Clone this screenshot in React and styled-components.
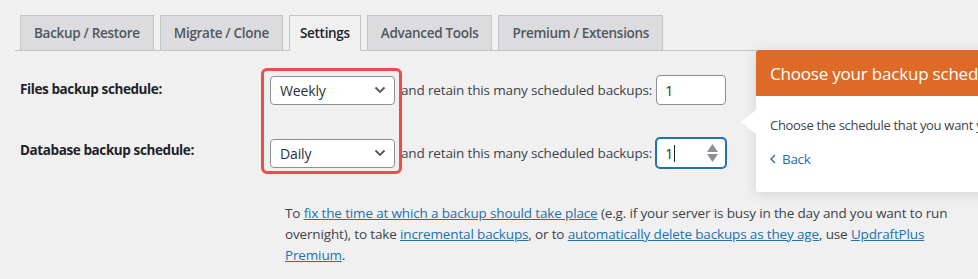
import React from 'react'
import styled, { createGlobalStyle } from 'styled-components'

const GlobalStyle = createGlobalStyle`
  html, body {
    margin: 0;
    padding: 0;
    background: #f0f0f1;
    font-family: "Open Sans", "Noto Sans", Arial, sans-serif;
    color: #3c434a;
    overflow: hidden;
  }
`

const Page = styled.div`
  position: relative;
  width: 978px;
  height: 279px;
  padding: 15px 0 0 15px;
  box-sizing: border-box;
`

const TabBar = styled.nav`
  display: flex;
  align-items: flex-end;
  gap: 6px;
  height: 35px;
  padding-left: 5px;
  border-bottom: 1px solid #c3c4c7;
  box-sizing: content-box;
`

const Tab = styled.a`
  display: flex;
  align-items: center;
  height: 34px;
  padding: 0 ${p => p.$pad || 13}px;
  margin-bottom: -1px;
  border: 1px solid #c3c4c7;
  border-bottom-color: ${p => (p.$active ? '#f0f0f1' : '#c3c4c7')};
  background: ${p => (p.$active ? '#f0f0f1' : '#dcdcde')};
  color: ${p => (p.$active ? '#1d2327' : '#50575e')};
  font-size: 13.5px;
  font-weight: 600;
  letter-spacing: -0.3px;
  white-space: nowrap;
`

const Form = styled.div`
  display: flex;
  flex-direction: column;
  padding-left: 5px;
  margin-top: 9px;
`

const Row = styled.div`
  display: grid;
  grid-template-columns: 250px 1fr;
  padding: 15px 0 ${p => p.$bottom || 18}px;
`

const Label = styled.div`
  padding-top: ${p => p.$top ?? 4}px;
  font-size: 13.5px;
  font-weight: 700;
  color: #1d2327;
  line-height: 20px;
  letter-spacing: -0.4px;
`

const Field = styled.div`
  display: flex;
  align-items: center;
  font-size: 13.5px;
  color: #3c434a;
  letter-spacing: -0.15px;
`

const Select = styled.div`
  display: flex;
  align-items: center;
  justify-content: space-between;
  width: 125px;
  height: 29px;
  box-sizing: border-box;
  padding: 0 8px 0 9px;
  border: 1px solid #8c8f94;
  border-radius: 4px;
  background: #fff;
  color: #2c3338;
  font-size: 14px;
  margin-right: 6px;
`

const NumberBox = styled.div`
  position: relative;
  display: flex;
  align-items: center;
  width: 70px;
  height: 30px;
  box-sizing: border-box;
  margin-left: 4px;
  padding-left: 8px;
  border: 1px solid ${p => (p.$focus ? '#2271b1' : '#8c8f94')};
  box-shadow: ${p => (p.$focus ? '0 0 0 1px #2271b1' : 'none')};
  border-radius: 4px;
  background: #fff;
  color: #2c3338;
  font-size: 14px;
`

const Caret = styled.span`
  display: inline-block;
  width: 1px;
  height: 17px;
  margin-left: 1px;
  background: #1d2327;
`

const Spinner = styled.div`
  position: absolute;
  right: 7px;
  top: 5px;
  display: flex;
  flex-direction: column;
  gap: 2px;
`

const Highlight = styled.div`
  position: absolute;
  left: 261px;
  top: 68px;
  width: 141px;
  height: 106px;
  box-sizing: border-box;
  border: 3px solid #f04b4c;
  border-radius: 6px;
  pointer-events: none;
`

const Note = styled.p`
  margin: 17px 0 0 270px;
  width: 672px;
  font-size: 13.5px;
  line-height: 21px;
  color: #3c434a;
  letter-spacing: -0.15px;
`

const Link = styled.a`
  color: #2271b1;
  text-decoration: underline;
`

const Popover = styled.div`
  position: absolute;
  left: 756px;
  top: 50px;
  width: 320px;
  height: 142px;
  background: #fff;
  border-radius: 3px;
  box-shadow: 0 2px 14px rgba(0, 0, 0, 0.12);

  &::before {
    content: '';
    position: absolute;
    left: -15px;
    top: 60px;
    border-top: 12px solid transparent;
    border-bottom: 12px solid transparent;
    border-right: 15px solid #fff;
  }
`

const PopHeader = styled.div`
  height: 46px;
  display: flex;
  align-items: center;
  padding-left: 14px;
  background: #dd6a26;
  color: #fff;
  font-size: 17px;
  letter-spacing: -0.2px;
  border-radius: 3px 3px 0 0;
  white-space: nowrap;
`

const PopBody = styled.div`
  padding: 20px 14px 0;
  font-size: 13px;
  letter-spacing: -0.3px;
  color: #3c434a;
  white-space: nowrap;
`

const Back = styled.a`
  display: flex;
  align-items: center;
  gap: 6px;
  margin-top: 16px;
  color: #2271b1;
  font-size: 13.5px;
`

const Chevron = () => (
  <svg width="12" height="8" viewBox="0 0 12 8">
    <path d="M1.5 1.5 6 6l4.5-4.5" fill="none" stroke="#50575e" strokeWidth="1.8" />
  </svg>
)

const tabs = [
  ['Backup / Restore', false],
  ['Migrate / Clone', false],
  ['Settings', true],
  ['Advanced Tools', false],
  ['Premium / Extensions', false],
]

export default function App() {
  return (
    <>
      <GlobalStyle />
      <Page>
        <TabBar>
          {tabs.map(([t, a]) => (
            <Tab key={t} $active={a} $pad={a ? 10 : 13}>{t}</Tab>
          ))}
        </TabBar>
        <Form>
          <Row>
            <Label>Files backup schedule:</Label>
            <Field>
              <Select>Weekly<Chevron /></Select>
              and retain this many scheduled backups:
              <NumberBox>1</NumberBox>
            </Field>
          </Row>
          <Row $bottom={0}>
            <Label $top={2}>Database backup schedule:</Label>
            <Field>
              <Select>Daily<Chevron /></Select>
              and retain this many scheduled backups:
              <NumberBox $focus>
                1<Caret />
                <Spinner>
                  <svg width="11" height="8" viewBox="0 0 11 8"><path d="M5.5 0 11 8H0z" fill="#8c8f94" /></svg>
                  <svg width="11" height="8" viewBox="0 0 11 8"><path d="M0 0h11L5.5 8z" fill="#8c8f94" /></svg>
                </Spinner>
              </NumberBox>
            </Field>
          </Row>
        </Form>
        <Note>
          To <Link>fix the time at which a backup should take place</Link> (e.g. if your server is busy in the day and you want to run overnight), to take <Link>incremental backups</Link>, or to <Link>automatically delete backups as they age</Link>, use <Link>UpdraftPlus Premium</Link>.
        </Note>
        <Highlight />
        <Popover>
          <PopHeader>Choose your backup schedule</PopHeader>
          <PopBody>
            Choose the schedule that you want your backups to run on.
            <Back>
              <svg width="6" height="10" viewBox="0 0 6 10"><path d="M5 1 1 5l4 4" fill="none" stroke="#2271b1" strokeWidth="1.4" /></svg>
              Back
            </Back>
          </PopBody>
        </Popover>
      </Page>
    </>
  )
}
